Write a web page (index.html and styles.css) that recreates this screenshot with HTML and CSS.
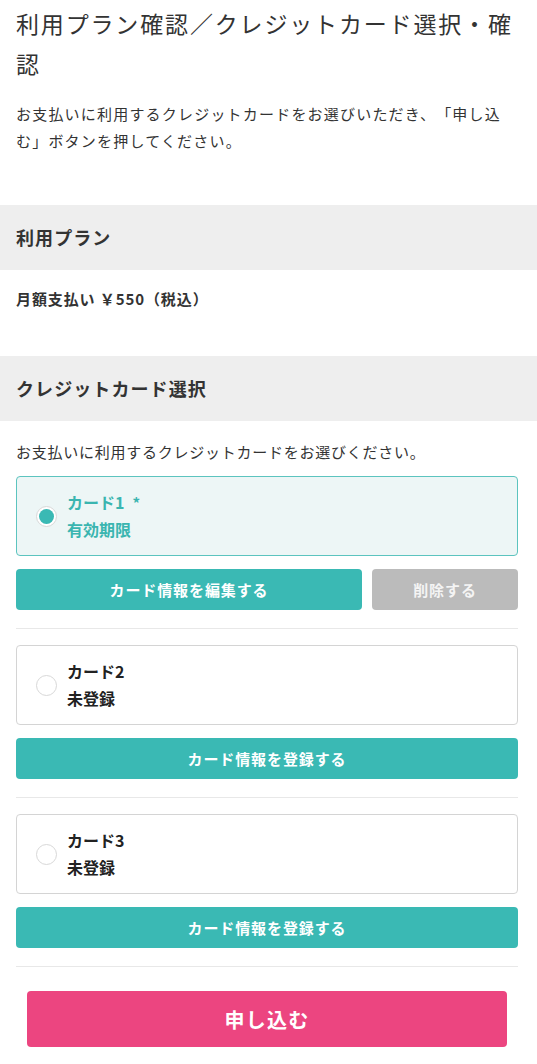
FILE: index.html
```html
<!DOCTYPE html>
<html lang="ja">
<head>
    <meta charset="UTF-8">
    <meta name="viewport" content="width=device-width, initial-scale=1.0">
    <title>利用プラン確認／クレジットカード選択・確認</title>
    <link rel="stylesheet" href="styles.css">
</head>
<body>
    <h1 class="page-title">利用プラン確認／クレジットカード選択・確認</h1>
    <p class="lead">お支払いに利用するクレジットカードをお選びいただき、「申し込む」ボタンを押してください。</p>

    <h2 class="band">利用プラン</h2>
    <p class="plan">月額支払い ￥550（税込）</p>

    <h2 class="band">クレジットカード選択</h2>
    <p class="note">お支払いに利用するクレジットカードをお選びください。</p>

    <form class="cards" onsubmit="return false">
        <div class="card-block">
            <label class="card is-selected">
                <input type="radio" name="card" value="1" checked>
                <span class="radio"></span>
                <span class="card-text">
                    <span class="card-name">カード1<span class="mark">*</span></span>
                    <span class="card-sub">有効期限</span>
                </span>
            </label>
            <div class="button-group">
                <button type="button" class="btn btn-main">カード情報を編集する</button>
                <button type="button" class="btn btn-delete">削除する</button>
            </div>
        </div>

        <div class="card-block">
            <label class="card">
                <input type="radio" name="card" value="2">
                <span class="radio"></span>
                <span class="card-text">
                    <span class="card-name">カード2</span>
                    <span class="card-sub">未登録</span>
                </span>
            </label>
            <div class="button-group">
                <button type="button" class="btn btn-main">カード情報を登録する</button>
            </div>
        </div>

        <div class="card-block">
            <label class="card">
                <input type="radio" name="card" value="3">
                <span class="radio"></span>
                <span class="card-text">
                    <span class="card-name">カード3</span>
                    <span class="card-sub">未登録</span>
                </span>
            </label>
            <div class="button-group">
                <button type="button" class="btn btn-main">カード情報を登録する</button>
            </div>
        </div>

        <div class="submit-wrap">
            <button type="submit" class="btn-submit">申し込む</button>
        </div>
    </form>
</body>
</html>
```

FILE: styles.css
```css
body {
    font-family: "Noto Sans CJK JP", "Noto Sans", sans-serif;
    color: #333;
    background-color: #fff;
    margin: 0;
    padding: 0;
    text-spacing-trim: space-all;
}

.page-title {
    font-size: 23px;
    font-weight: 400;
    letter-spacing: 0.08em;
    line-height: 40px;
    margin: 0;
    padding: 3px 19px 0 16px;
}

.lead {
    font-size: 15px;
    letter-spacing: 0.08em;
    line-height: 27px;
    margin: 17px 0 0;
    padding: 0 19px 0 16px;
}

.band {
    background-color: #eeeeee;
    font-size: 18px;
    font-weight: 700;
    letter-spacing: 0.06em;
    line-height: 65px;
    height: 65px;
    margin: 51px 0 0;
    padding: 0 16px;
}

.plan {
    font-size: 15px;
    font-weight: 700;
    letter-spacing: 0.06em;
    line-height: 24px;
    margin: 17px 16px 45px;
}

.plan + .band {
    margin-top: 0;
}

.note {
    font-size: 15px;
    letter-spacing: 0.05em;
    line-height: 24px;
    margin: 19px 16px 12px;
}

.cards {
    padding: 0 19px 0 16px;
}

.card-block {
    padding-bottom: 18px;
    margin-bottom: 16px;
    border-bottom: 1px solid #e8e8e8;
}

.card {
    display: flex;
    align-items: center;
    gap: 10px;
    height: 80px;
    box-sizing: border-box;
    padding: 0 19px;
    border: 1px solid #d4d4d4;
    border-radius: 4px;
    cursor: pointer;
}

.card input {
    display: none;
}

.radio {
    width: 21px;
    height: 21px;
    box-sizing: border-box;
    border: 1px solid #d8d8d8;
    border-radius: 50%;
    background-color: #fff;
    display: flex;
    align-items: center;
    justify-content: center;
    flex-shrink: 0;
}

.card-text {
    display: flex;
    flex-direction: column;
    font-size: 16px;
    font-weight: 700;
    line-height: 27px;
    color: #222;
}

.mark {
    margin-left: 8px;
    font-size: 15px;
}

.card.is-selected {
    border-color: #5cc4bf;
    background-color: #edf6f6;
}

.card.is-selected .card-text {
    color: #3ab5b0;
}

.card.is-selected .radio::after {
    content: "";
    width: 15px;
    height: 15px;
    border-radius: 50%;
    background-color: #3ab9b4;
}

.button-group {
    display: flex;
    gap: 10px;
    margin-top: 13px;
}

.btn {
    height: 41px;
    border: none;
    border-radius: 4px;
    font-family: inherit;
    font-size: 15px;
    font-weight: 700;
    letter-spacing: 0.06em;
    color: #fff;
    cursor: pointer;
}

.btn-main {
    flex: 1;
    background-color: #3ab9b4;
}

.btn-delete {
    width: 146px;
    background-color: #bbbbbb;
    color: #f4f4f4;
}

.submit-wrap {
    padding: 8px 11px 17px;
}

.btn-submit {
    display: block;
    width: 100%;
    height: 56px;
    border: none;
    border-radius: 4px;
    background-color: #ec4580;
    color: #fff;
    font-family: inherit;
    font-size: 20px;
    font-weight: 700;
    letter-spacing: 0.06em;
    cursor: pointer;
}
```
